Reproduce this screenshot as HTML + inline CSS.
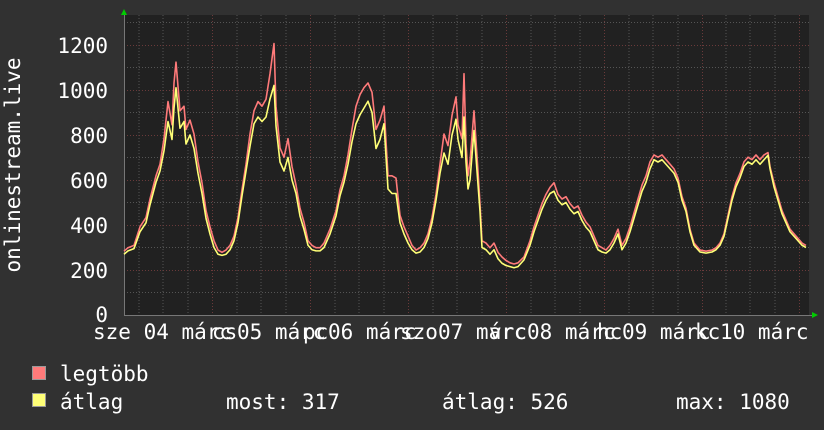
<!DOCTYPE html>
<html><head><meta charset="utf-8"><style>
html,body{margin:0;padding:0;background:#313131;}
svg{display:block}
text{font-family:"DejaVu Sans Mono","Liberation Mono",monospace;fill:#fff;font-size:21px}
</style></head><body>
<svg width="824" height="430" viewBox="0 0 824 430">
<rect width="824" height="430" fill="#313131"/>
<rect x="124" y="15" width="685" height="300" fill="#212121"/>
<g stroke="#555" stroke-width="1" stroke-dasharray="1,2">
<line x1="124" x2="809" y1="292.5" y2="292.5"/><line x1="124" x2="809" y1="247.5" y2="247.5"/>
<line x1="124" x2="809" y1="202.5" y2="202.5"/><line x1="124" x2="809" y1="157.5" y2="157.5"/>
<line x1="124" x2="809" y1="112.5" y2="112.5"/><line x1="124" x2="809" y1="67.5" y2="67.5"/>
<line x1="124" x2="809" y1="22.5" y2="22.5"/>
<line x1="139" x2="139" y1="15" y2="315"/><line x1="163" x2="163" y1="15" y2="315"/><line x1="188" x2="188" y1="15" y2="315"/>
<line x1="237" x2="237" y1="15" y2="315"/><line x1="261" x2="261" y1="15" y2="315"/><line x1="286" x2="286" y1="15" y2="315"/>
<line x1="335" x2="335" y1="15" y2="315"/><line x1="359" x2="359" y1="15" y2="315"/><line x1="384" x2="384" y1="15" y2="315"/>
<line x1="433" x2="433" y1="15" y2="315"/><line x1="457" x2="457" y1="15" y2="315"/><line x1="482" x2="482" y1="15" y2="315"/>
<line x1="531" x2="531" y1="15" y2="315"/><line x1="555" x2="555" y1="15" y2="315"/><line x1="580" x2="580" y1="15" y2="315"/>
<line x1="629" x2="629" y1="15" y2="315"/><line x1="653" x2="653" y1="15" y2="315"/><line x1="678" x2="678" y1="15" y2="315"/>
<line x1="726" x2="726" y1="15" y2="315"/><line x1="750" x2="750" y1="15" y2="315"/><line x1="775" x2="775" y1="15" y2="315"/>
</g>
<g stroke="#6a3a3a" stroke-width="1" stroke-dasharray="1,2">
<line x1="124" x2="809" y1="270.5" y2="270.5"/><line x1="124" x2="809" y1="225.5" y2="225.5"/>
<line x1="124" x2="809" y1="180.5" y2="180.5"/><line x1="124" x2="809" y1="135.5" y2="135.5"/>
<line x1="124" x2="809" y1="90.5" y2="90.5"/><line x1="124" x2="809" y1="45.5" y2="45.5"/>
<line x1="212.5" x2="212.5" y1="15" y2="315"/><line x1="310.5" x2="310.5" y1="15" y2="315"/>
<line x1="408.5" x2="408.5" y1="15" y2="315"/><line x1="506.5" x2="506.5" y1="15" y2="315"/>
<line x1="604.5" x2="604.5" y1="15" y2="315"/><line x1="702.5" x2="702.5" y1="15" y2="315"/>
<line x1="799.5" x2="799.5" y1="15" y2="315"/>
</g>
<line x1="124" x2="812" y1="315.5" y2="315.5" stroke="#777"/>
<line x1="124.5" x2="124.5" y1="12" y2="315" stroke="#777"/>
<polygon points="121,15 127,15 124,9" fill="#0c0"/>
<polygon points="812,312 812,318 818,315" fill="#0c0"/>
<g fill="none" stroke-width="1.6" stroke-linejoin="round">
<polyline stroke="#ff7a7a" vector-effect="non-scaling-stroke" transform="matrix(1 0 0 -0.232 0 315)" points="124,275 128,290 134,300 140,380 146,420 150,500 156,600 160,650 164,760 168,920 172,820 174,1000 176,1090 180,880 184,900 186,800 190,840 194,780 198,660 202,570 206,450 210,380 214,320 218,280 222,270 226,280 230,300 234,340 238,420 242,540 246,650 250,780 254,880 258,920 262,900 266,930 270,1040 274,1170 276,900 280,720 284,680 288,760 292,640 296,560 300,460 304,400 308,320 312,300 316,290 320,290 324,310 330,370 336,450 340,540 344,600 348,690 352,800 356,900 360,950 364,980 368,1000 372,960 376,800 380,840 384,900 388,600 392,600 396,590 400,430 404,380 408,340 412,300 416,280 420,290 424,310 428,350 432,420 436,520 440,650 444,780 448,730 452,860 456,940 458,820 462,760 464,1040 466,740 468,600 470,660 474,880 478,620 480,480 482,320 486,310 490,290 494,310 498,270 502,250 506,235 510,225 514,220 518,225 524,250 530,320 534,380 538,430 542,480 546,520 550,550 554,570 558,520 562,500 566,510 570,480 574,460 578,470 582,430 586,400 590,380 594,340 598,300 602,290 606,280 610,300 614,330 618,370 622,300 626,330 630,380 634,440 638,500 642,560 646,600 650,660 654,690 658,680 662,690 666,670 670,650 674,630 678,590 682,510 686,460 690,370 694,310 700,280 706,275 712,280 716,290 720,310 724,350 728,430 732,510 736,570 740,610 744,660 748,680 752,670 756,690 760,670 764,690 768,700 770,640 774,570 778,510 782,450 786,410 790,370 794,350 798,330 802,310 806,300"/>
<polyline stroke="#ffff77" vector-effect="non-scaling-stroke" transform="matrix(1 0 0 -0.225 0 315)" points="124,270 128,285 134,295 140,370 146,410 150,490 156,590 160,640 164,730 168,860 172,780 174,920 176,1010 180,830 184,860 186,760 190,800 194,740 198,630 202,540 206,430 210,360 214,300 218,270 222,265 226,270 230,290 234,330 238,410 242,530 246,640 250,750 254,850 258,880 262,860 266,880 270,960 274,1020 276,840 280,680 284,640 288,700 292,600 296,540 300,440 304,380 308,310 312,290 316,285 320,285 324,300 330,360 336,440 340,530 344,590 348,670 352,770 356,850 360,890 364,920 368,950 372,900 376,740 380,780 384,850 388,560 392,540 396,540 400,410 404,360 408,320 412,290 416,275 420,280 424,300 428,340 432,410 436,510 440,630 444,720 448,670 452,800 456,870 458,780 462,700 464,880 466,680 468,560 470,600 474,820 478,580 480,460 482,300 486,290 490,270 494,290 498,250 502,230 506,220 510,215 514,210 518,215 524,245 530,310 534,370 538,420 542,470 546,510 550,540 554,550 558,510 562,490 566,500 570,470 574,450 578,460 582,420 586,390 590,370 594,330 598,290 602,280 606,275 610,290 614,320 618,360 622,290 626,320 630,370 634,430 638,490 642,550 646,590 650,650 654,690 658,680 662,690 666,670 670,650 674,630 678,590 682,510 686,460 690,370 694,310 700,280 706,275 712,280 716,290 720,310 724,350 728,430 732,510 736,570 740,610 744,660 748,680 752,670 756,690 760,670 764,690 768,710 770,650 774,570 778,510 782,450 786,410 790,370 794,350 798,330 802,310 806,300"/>
</g>
<g text-anchor="end">
<text x="108" y="53">1200</text><text x="108" y="98">1000</text><text x="108" y="143">800</text>
<text x="108" y="188">600</text><text x="108" y="233">400</text><text x="108" y="278">200</text>
<text x="108" y="322">0</text>
</g>
<text transform="translate(20,165) rotate(-90)" text-anchor="middle">onlinestream.live</text>
<g>
<text x="93" y="339">sze 04 márc</text>
<text x="237" y="339">05 márc</text>
<text x="328" y="339">06 márc</text>
<text x="438" y="339">07 márc</text>
<text x="527" y="339">08 márc</text>
<text x="622" y="339">09 márc</text>
<text x="720" y="339">10 márc</text>
<text x="212" y="339">cs</text>
<text x="303" y="339">pc</text>
<text x="400" y="339">szo</text>
<text x="489" y="339">vrc</text>
<text x="597" y="339">hc</text>
<text x="695" y="339">kc</text>
</g>
<rect x="32.5" y="366.5" width="13" height="13" fill="#ff7a7a" stroke="#999"/>
<rect x="32.5" y="393.5" width="13" height="13" fill="#ffff77" stroke="#999"/>
<text x="60" y="381">legtöbb</text>
<text x="60" y="409">átlag</text>
<text x="226" y="409">most: 317</text>
<text x="442" y="409">átlag: 526</text>
<text x="676" y="409">max: 1080</text>
</svg>
</body></html>
